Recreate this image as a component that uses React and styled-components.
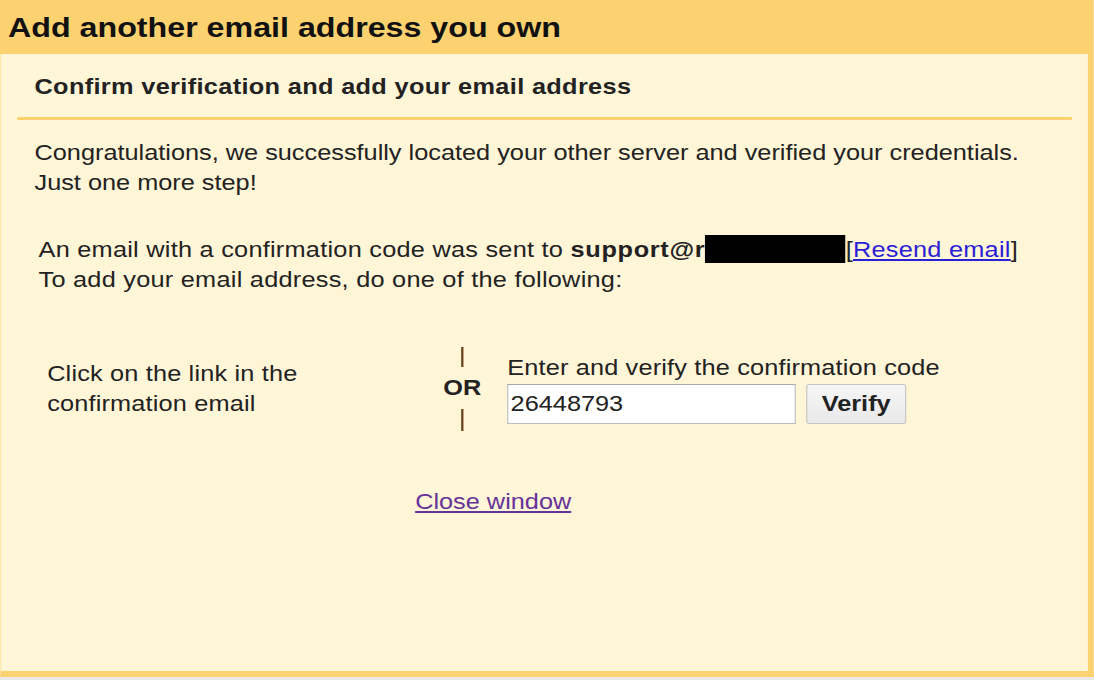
import styled, { createGlobalStyle } from 'styled-components';

const GlobalStyle = createGlobalStyle`
	html, body {
		margin: 0;
		padding: 0;
		background: #e9e9e9;
		font-family: "Liberation Sans", Arial, sans-serif;
		color: #222;
		overflow: hidden;
	}
`;

const yellow = '#fbd26f';

// the source window is rendered a bit wider than tall, so the whole dialog is stretched horizontally
const Window = styled.div`
	width: 951.3px;
	height: 677px;
	display: flex;
	flex-direction: column;
	background: #fff5d7;
	transform: scaleX(1.15);
	transform-origin: 0 0;
`;

const TitleBar = styled.div`
	height: 54px;
	flex-shrink: 0;
	background: ${yellow};
	padding-left: 7px;
	font-size: 28px;
	font-weight: 700;
	line-height: 56px;
	color: #111;
`;

const Body = styled.div`
	flex: 1;
	border-left: 1px solid #fde8a9;
	border-right: 5.2px solid ${yellow};
	border-bottom: 6px solid ${yellow};
	padding: 0 14px;
`;

const SubTitle = styled.div`
	padding: 18px 15px 0;
	font-size: 22px;
	font-weight: 700;
	line-height: 30px;
	letter-spacing: 0.3px;
	height: 45px;
	border-bottom: 3px solid ${yellow};
`;

const Content = styled.div`
	padding: 18px 15px 0;
	font-size: 22px;
	line-height: 30px;
`;

const Para = styled.p`
	margin: 0 0 37px;
	padding-left: ${(p) => p.$indent || 0}px;
	letter-spacing: ${(p) => p.$spacing || 0}px;
`;

const Bold = styled.b`
	font-weight: 700;
	letter-spacing: 0.6px;
`;

const Redacted = styled.span`
	display: inline-block;
	width: 122px;
	height: 28px;
	background: #000;
	vertical-align: -6px;
`;

const Link = styled.a`
	color: ${(p) => (p.$visited ? '#663399' : '#2a1fd6')};
	text-decoration: underline;
	cursor: pointer;
`;

const Options = styled.div`
	display: flex;
	align-items: flex-start;
	margin-top: 30px;
	padding-left: 11px;
`;

const LinkOption = styled.div`
	width: 322px;
	padding-top: 27px;
	letter-spacing: 0.15px;
`;

const OrColumn = styled.div`
	width: 78px;
	display: flex;
	flex-direction: column;
	align-items: center;
	padding-top: 15px;
	font-weight: 700;
`;

const Bar = styled.span`
	display: block;
	width: 2px;
	height: ${(p) => p.$h}px;
	background: #6b4420;
`;

const OrText = styled.span`
	line-height: 42px;
`;

const CodeOption = styled.div`
	display: flex;
	flex-direction: column;
	padding-top: 21px;
`;

const CodeLabel = styled.span`
	letter-spacing: 0.15px;
`;

const CodeRow = styled.div`
	display: flex;
	gap: 9px;
	margin-top: 1px;
`;

const Input = styled.input`
	width: 251px;
	height: 40px;
	box-sizing: border-box;
	border: 1px solid #bdbdbd;
	border-top-color: #a8a8a8;
	background: #fff;
	font-family: inherit;
	font-size: 22px;
	padding: 0 2px;
	color: #222;
	outline: none;
`;

const Button = styled.button`
	width: 87px;
	height: 40px;
	padding: 0;
	border: 1px solid #c4c4c4;
	border-radius: 3px;
	background: linear-gradient(#f6f6f6, #e9e9e9);
	font-family: inherit;
	font-size: 22px;
	font-weight: 700;
	color: #222;
	cursor: pointer;
`;

const Footer = styled.div`
	margin-top: 56px;
	padding-left: 331px;
`;

export default function App() {
	return (
		<>
			<GlobalStyle />
			<Window>
				<TitleBar>Add another email address you own</TitleBar>
				<Body>
					<SubTitle>Confirm verification and add your email address</SubTitle>
					<Content>
						<Para>
							Congratulations, we successfully located your other server and verified your credentials.
							<br />
							Just one more step!
						</Para>
						<Para $indent={3.5} $spacing={0.22}>
							An email with a confirmation code was sent to <Bold>support@r</Bold>
							<Redacted />[<Link>Resend email</Link>]
							<br />
							To add your email address, do one of the following:
						</Para>
						<Options>
							<LinkOption>
								Click on the link in the
								<br />
								confirmation email
							</LinkOption>
							<OrColumn>
								<Bar $h={20} />
								<OrText>OR</OrText>
								<Bar $h={22} />
							</OrColumn>
							<CodeOption>
								<CodeLabel>Enter and verify the confirmation code</CodeLabel>
								<CodeRow>
									<Input defaultValue="26448793" />
									<Button>Verify</Button>
								</CodeRow>
							</CodeOption>
						</Options>
						<Footer>
							<Link $visited>Close window</Link>
						</Footer>
					</Content>
				</Body>
			</Window>
		</>
	);
}
